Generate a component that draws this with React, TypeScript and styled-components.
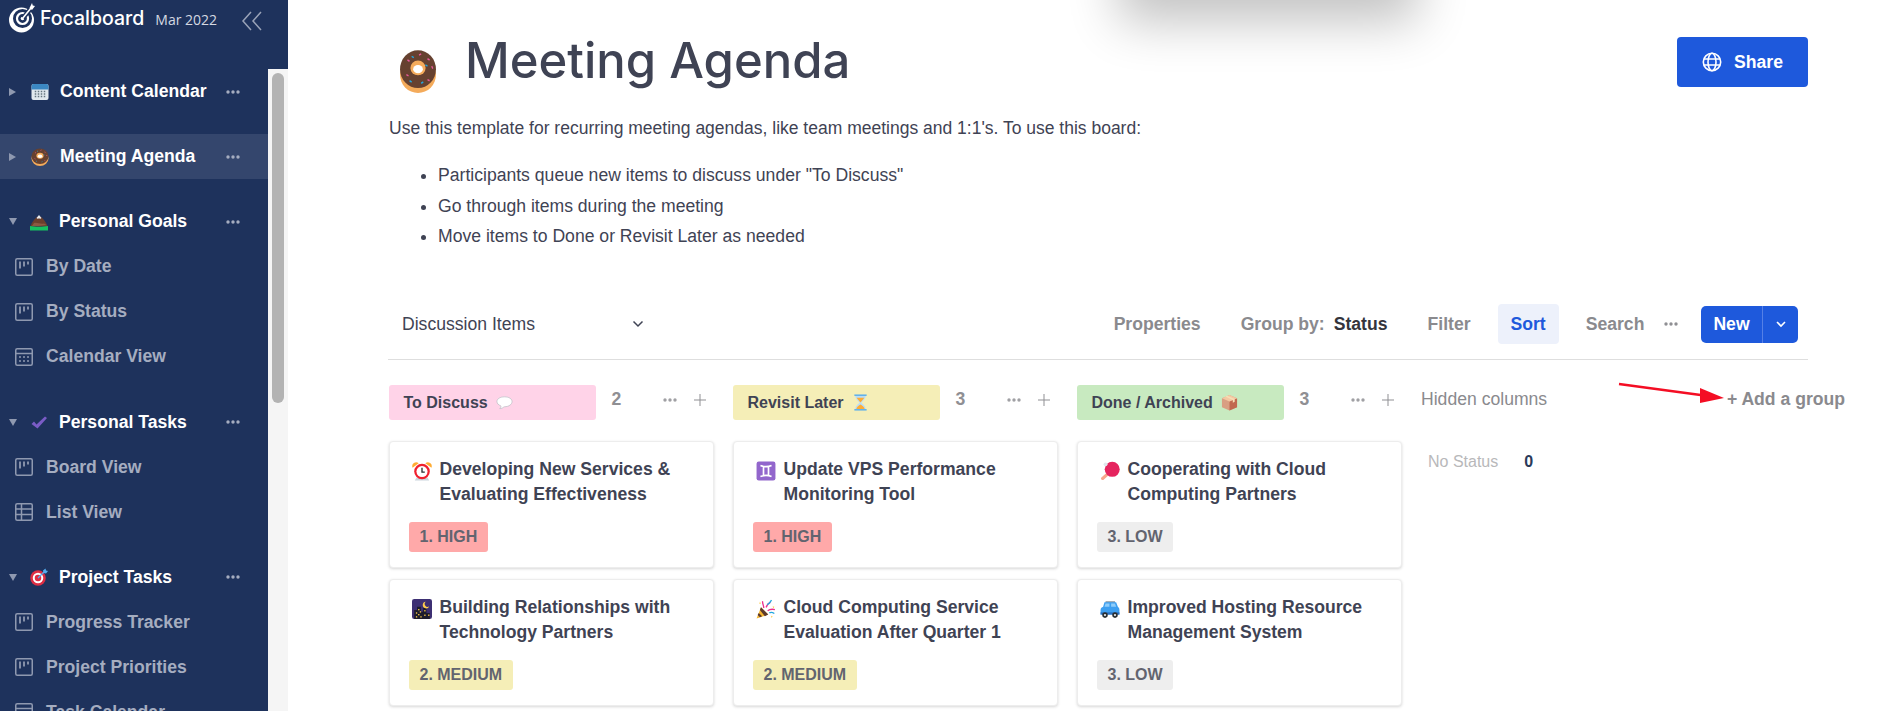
import * as React from 'react';
import styled, { createGlobalStyle } from 'styled-components';

const GlobalStyle = createGlobalStyle`
    html, body { margin: 0; padding: 0; height: 100%; overflow: hidden; background: #fff; }
    body { font-family: "Liberation Sans", Arial, sans-serif; color: #3f4354; }
`;

type EmojiName = 'calendar' | 'donut' | 'mountain' | 'check' | 'target' | 'alarm' | 'gemini' | 'night'
    | 'party' | 'pong' | 'car' | 'hourglass' | 'speech' | 'package';

const EmojiSvg = styled.svg<{ $size: number, $height?: number }>`
    display: block;
    flex: none;
    width: ${p => p.$size}px;
    height: ${p => p.$height ? p.$height : p.$size}px;
`;

const emojiParts: { [key in EmojiName]: React.ReactNode } = {
    calendar: <>
        <rect x="1" y="2" width="34" height="32" rx="4" fill="#e1e8ed" />
        <path d="M1 13V6a4 4 0 0 1 4-4h26a4 4 0 0 1 4 4v7z" fill="#3b88c3" />
        {[9, 15, 21, 27].map(x => [17, 22, 27].map(y => <rect key={x + '-' + y} x={x - 1.5} y={y - 1.5} width="3" height="3" fill="#66757f" />))}
    </>,
    donut: <>
        <ellipse cx="18" cy="21" rx="17" ry="15" fill="#f4ab5b" />
        <ellipse cx="18" cy="16.5" rx="17" ry="15.5" fill="#664130" />
        <ellipse cx="18" cy="15.5" rx="7.2" ry="6" fill="#f4ab5b" />
        <ellipse cx="18" cy="16.5" rx="4.6" ry="3.4" fill="#fff" />
        <path d="M8 9l2 1M19 5l2-1M27 8l2 1M31 14l1 2M7 21l2 1M27 25l2 1" stroke="#ea5a9c" strokeWidth="1.2" />
        <path d="M12 6l2 1M25 13l2 1M10 26l2 1M21 28l2-1" stroke="#22a7e0" strokeWidth="1.2" />
    </>,
    mountain: <>
        <path d="M1 27C3 19 11 8 18 6c7 2 15 13 17 21z" fill="#6a3f2c" />
        <path d="M13 10l5-6 5 6-3 2-2-2-2 2z" fill="#e6e9ee" />
        <path d="M8 20c6-2 13 3 20 1l5 3-16 2-13 0z" fill="#8a5a42" />
        <path d="M0 26c9 2 26 2 36 0v9H0z" fill="#16c060" />
    </>,
    check: <path d="M3 22l5-5 5 6L30 7l4 3-19 21z" fill="#7a5cc6" />,
    target: <>
        <circle cx="16" cy="20" r="15.5" fill="#dd2e44" />
        <circle cx="16" cy="20" r="10.5" fill="#fff" />
        <circle cx="16" cy="20" r="6.5" fill="#dd2e44" />
        <path d="M16 20L30 6" stroke="#55acee" strokeWidth="2.4" />
        <path d="M26 5l5-4 1 4 4 1-4 5-5-1z" fill="#55acee" />
    </>,
    alarm: <>
        <path d="M1 12a7 7 0 0 1 11-8zM35 12a7 7 0 0 0-11-8z" fill="#ffac33" />
        <path d="M8 30h20l3 5H5z" fill="#ccd6dd" />
        <circle cx="18" cy="19" r="14" fill="#f0202e" />
        <circle cx="18" cy="19" r="10" fill="#fff" />
        <path d="M18 12v8h5" stroke="#292f33" strokeWidth="2.400" fill="none" />
    </>,
    gemini: <>
        <rect x="1" y="1" width="34" height="34" rx="4" fill="#9266cc" />
        <path d="M8 8c6 2.5 14 2.5 20 0M8 28c6-2.500 14-2.500 20 0M13.500 10v16M22.500 10v16" stroke="#fff" strokeWidth="3" fill="none" />
    </>,
    night: <>
        <rect x="0" y="0" width="36" height="36" rx="4" fill="#3d2f73" />
        <path d="M4 36V20h5v-6h7v9h4v-7h6v9h6v11z" fill="#1c1c2c" />
        <path d="M25 5a6 6 0 1 0 6 8 5 5 0 0 1-6-8z" fill="#ffcc4d" />
        {[[7, 24], [11, 18], [11, 27], [14, 22], [22, 20], [22, 28], [29, 28], [7, 31], [15, 31]].map(([x, y]) => <rect key={x + '-' + y} x={x} y={y} width="2.400" height="2.400" fill="#ffcc4d" />)}
    </>,
    party: <>
        <path d="M1 35l8-20 13 13z" fill="#f5b530" />
        <path d="M5 25l6 6-4 2-4-4zM9 15l13 13-6 3L7 20z" fill="#5c3a2e" />
        <path d="M14 16c0-5-3-8-2-12M18 15c3-4 2-7 8-9M21 21c4-3 8-3 13-2" stroke="#ec2f8c" strokeWidth="2.400" fill="none" />
        <path d="M20 10c3-1 5-3 8-8M24 25c3-2 6-1 9 1" stroke="#22a7e0" strokeWidth="2.400" fill="none" />
        <path d="M7 5l2 3-3 1zM30 13l3 1-2 3zM27 30l3 1-2 3z" fill="#ffcc4d" />
    </>,
    pong: <>
        <path d="M11 22l-9 8a3 3 0 0 0 4 4l9-8z" fill="#f7a78d" />
        <circle cx="22" cy="15" r="13.500" fill="#e5245e" />
        <circle cx="10" cy="6" r="3.500" fill="#e1e8ed" />
    </>,
    car: <>
        <path d="M10 4h17v3H10z" fill="#8a97a3" />
        <path d="M8 6h21l4 10H5z" fill="#3d9ff0" />
        <path d="M1 20c0-4 3-6 7-6h21c4 0 6 2 6 6v8H1z" fill="#3d9ff0" />
        <path d="M10 8h7v6H8zM20 8h7l2 6h-9z" fill="#8fcdfa" />
        <path d="M1 24h34v4H1z" fill="#2a6fc0" />
        <circle cx="9" cy="29" r="5" fill="#292f33" /><circle cx="9" cy="29" r="2" fill="#e1e8ed" />
        <circle cx="27" cy="29" r="5" fill="#292f33" /><circle cx="27" cy="29" r="2" fill="#e1e8ed" />
    </>,
    hourglass: <>
        <path d="M7 3h22c0 8-7 12-9 15 2 3 9 7 9 15H7c0-8 7-12 9-15-2-3-9-7-9-15z" fill="#bbddf5" />
        <path d="M10 8h16c-2 4-6 7-8 10-2-3-6-6-8-10zM9 32c1-5 6-8 9-10 3 2 8 5 9 10z" fill="#ffac33" />
        <rect x="5" y="1" width="26" height="3" fill="#55acee" /><rect x="5" y="32" width="26" height="3" fill="#55acee" />
    </>,
    speech: <>
        <path d="M18 6C9 6 2 10 2 16c0 4 3 7 8 9 1 2 0 4-2 6 4 0 7-2 9-4h1c9 0 16-5 16-11S27 6 18 6z" fill="#fff" stroke="#b9bdc4" strokeWidth="1.500" />
    </>,
    package: <>
        <path d="M18 2l16 7v19l-16 7-16-7V9z" fill="#d99e82" />
        <path d="M18 16l16-7v19l-16 7z" fill="#c1694f" />
        <path d="M18 2l16 7-16 7-16-7z" fill="#f4c8a2" />
        <path d="M9 5.500l16 7v6l4-2v-6L13 3.500z" fill="#f7deb5" />
    </>,
};

const Emoji: React.FC<{ name: EmojiName, size: number, height?: number }> = (props) => (
    <EmojiSvg $size={props.size} $height={props.height} viewBox="0 0 36 36" preserveAspectRatio="none" aria-hidden="true">{emojiParts[props.name]}</EmojiSvg>
);

const Page = styled.div`
    display: flex;
    width: 1889px;
    height: 711px;
    overflow: hidden;
    position: relative;
`;

const Sidebar = styled.aside`
    flex: none;
    width: 288px;
    height: 711px;
    display: flex;
    flex-direction: column;
    background: #1e325c;
`;

const SideHeader = styled.div`
    flex: none;
    height: 69px;
    display: flex;
    align-items: flex-start;
    padding: 3px 0 0 9px;
    box-sizing: border-box;
`;

const LogoIcon = styled.svg`
    flex: none;
    width: 26px;
    height: 30px;
`;

const LogoText = styled.span`
    margin: 2px 0 0 5px;
    font-family: Inter, "Liberation Sans", sans-serif;
    font-size: 19.500px;
    line-height: 26px;
    font-weight: 500;
    color: #fff;
`;

const LogoDate = styled.span`
    margin: 6px 0 0 11px;
    font-family: "Open Sans", "Liberation Sans", sans-serif;
    font-size: 14px;
    line-height: 22px;
    color: #d5d9e2;
`;

const CollapseIcon = styled.svg`
    margin: 7px 0 0 24px;
    width: 22px;
    height: 22px;
    flex: none;
`;

const SideBody = styled.div`
    flex: 1;
    min-height: 0;
    display: flex;
`;

const SideList = styled.div`
    flex: 1;
    overflow: hidden;
`;

const Track = styled.div`
    flex: none;
    width: 20px;
    padding: 4px 4px 0;
    box-sizing: border-box;
    background: #f5f5f5;
`;

const Thumb = styled.div`
    height: 330px;
    border-radius: 6px;
    background: #b3b3b3;
`;

const Group = styled.div`
    margin-bottom: 20.200px;
`;

const BoardRow = styled.div<{ $active?: boolean }>`
    height: 45px;
    display: flex;
    align-items: center;
    padding-left: 9px;
    background: ${p => p.$active ? '#34466d' : 'transparent'};
`;

const Arrow = styled.span<{ $open?: boolean }>`
    flex: none;
    width: 0;
    height: 0;
    ${p => p.$open
        ? 'border-left: 4.500px solid transparent; border-right: 4.500px solid transparent; border-top: 7px solid #8f99b0; margin-right: 13px;'
        : 'border-top: 4.500px solid transparent; border-bottom: 4.500px solid transparent; border-left: 7px solid #8f99b0; margin-right: 15px;'}
`;

const BoardName = styled.span`
    flex: 1;
    margin-left: 11px;
    font-size: 17.600px;
    font-weight: 700;
    color: #fff;
`;

const SideDots = styled.svg`
    flex: none;
    width: 14px;
    height: 4px;
    margin-right: 28px;
`;

const ViewRow = styled.div`
    height: 45px;
    display: flex;
    align-items: center;
    gap: 13px;
    padding-left: 15px;
    font-size: 17.600px;
    font-weight: 700;
    color: #a5adc0;
`;

const ViewIcon = styled.svg`
    flex: none;
    width: 18px;
    height: 18px;
`;

const Main = styled.main`
    flex: 1;
    min-width: 0;
    padding: 37px 81px 0 100px;
`;

const TitleRow = styled.div`
    display: flex;
    align-items: flex-start;
    height: 70px;
    padding-left: 11px;
`;

const TitleEmoji = styled.div`
    flex: none;
    margin-top: 12px;
`;

const Title = styled.h1`
    flex: 1;
    margin: -12px 0 0 28px;
    font-family: Inter, "Liberation Sans", sans-serif;
    font-size: 49px;
    line-height: 72px;
    font-weight: 500;
    color: #3f4354;
`;

const ShareButton = styled.button`
    flex: none;
    width: 131px;
    height: 50px;
    display: flex;
    align-items: center;
    justify-content: center;
    gap: 12px;
    border: 0;
    border-radius: 4px;
    background: #1e59dc;
    color: #fff;
    font-family: inherit;
    font-size: 17.600px;
    font-weight: 700;
`;

const Description = styled.p`
    margin: 11px 0 0 1px;
    font-size: 17.500px;
    line-height: 20px;
    color: #3f4354;
`;

const Bullets = styled.ul`
    margin: 22px 0 0;
    padding: 0 0 0 50px;
    font-size: 17.600px;
    line-height: 30.500px;
    color: #3f4354;
`;

const Toolbar = styled.div`
    margin-top: 37.500px;
    height: 71px;
    display: flex;
    align-items: center;
    padding: 0 10px 0 14px;
    border-bottom: 1px solid #dedede;
    box-sizing: border-box;
`;

const ViewTitle = styled.div`
    width: 242px;
    display: flex;
    align-items: center;
    justify-content: space-between;
    font-size: 17.600px;
    color: #3f4354;
`;

const ToolGroup = styled.div`
    margin-left: auto;
    display: flex;
    align-items: center;
    gap: 14px;
`;

const ToolButton = styled.span<{ $active?: boolean }>`
    display: flex;
    align-items: center;
    height: 40px;
    padding: 0 13px;
    border-radius: 4px;
    font-size: 17.600px;
    font-weight: 700;
    color: ${p => p.$active ? '#1e59dc' : '#8a8a8e'};
    background: ${p => p.$active ? '#edf1fb' : 'transparent'};
`;

const GroupValue = styled.span`
    margin-left: 9px;
    color: #34343c;
`;

const MoreIcon = styled.svg`
    flex: none;
    margin-left: -7.400px;
`;

const NewButton = styled.div`
    display: flex;
    align-items: center;
    width: 97px;
    height: 37px;
    margin-left: 9px;
    border-radius: 5px;
    background: #1e59dc;
    color: #fff;
    font-size: 17.600px;
    font-weight: 700;
`;

const NewLabel = styled.span`
    width: 61px;
    height: 100%;
    display: flex;
    align-items: center;
    justify-content: center;
    border-right: 1px solid #5580e6;
`;

const NewCaret = styled.span`
    flex: 1;
    display: flex;
    justify-content: center;
`;

const Board = styled.div`
    display: flex;
    gap: 19px;
    padding: 25px 0 0 1px;
`;

const Column = styled.div`
    flex: none;
    width: 325px;
`;

const ColumnHeader = styled.div`
    height: 35px;
    display: flex;
    align-items: center;
    margin-bottom: 21px;
`;

const Pill = styled.div<{ $bg: string }>`
    flex: none;
    width: 206.500px;
    height: 35px;
    display: flex;
    align-items: center;
    gap: 8px;
    padding-left: 14.500px;
    box-sizing: border-box;
    border-radius: 3px;
    background: ${p => p.$bg};
    font-size: 16px;
    font-weight: 700;
    color: #3f4354;
`;

const Count = styled.span`
    width: 67.500px;
    padding-left: 16px;
    box-sizing: border-box;
    margin-top: -6px;
    font-size: 17.600px;
    font-weight: 700;
    color: #8f8f93;
`;

const HeaderIcon = styled.svg`
    flex: none;
    margin-top: -6px;
`;

const PlusIcon = styled(HeaderIcon)`
    margin-left: 17px;
`;

const Card = styled.div`
    height: 127px;
    margin-bottom: 11px;
    padding: 15px 19px 0;
    box-sizing: border-box;
    border: 1px solid #ededed;
    border-radius: 4px;
    background: #fff;
    box-shadow: 0 1px 3px rgba(0, 0, 0, 0.16);
`;

const CardHead = styled.div`
    display: flex;
    gap: 7.500px;
    padding-left: 3px;
`;

const CardEmojiBox = styled.div`
    flex: none;
    padding-top: 4px;
`;

const CardTitle = styled.div`
    font-size: 17.600px;
    line-height: 25px;
    font-weight: 700;
    color: #3f4354;
    white-space: nowrap;
`;

const Priority = styled.span<{ $bg: string }>`
    display: inline-block;
    margin-top: 15px;
    height: 30px;
    padding: 0 10.500px;
    border-radius: 3px;
    background: ${p => p.$bg};
    font-size: 16px;
    line-height: 30px;
    font-weight: 700;
    color: #62646f;
`;

const HiddenColumn = styled.div`
    flex: none;
    width: 424px;
`;

const HiddenHeader = styled.div`
    height: 35px;
    display: flex;
    align-items: flex-start;
    justify-content: space-between;
    padding-top: 5px;
    box-sizing: border-box;
    margin-bottom: 21px;
`;

const HiddenTitle = styled.span`
    font-size: 17.600px;
    line-height: 18px;
    color: #8a8a8e;
`;

const AddGroup = styled.span`
    font-size: 17.600px;
    line-height: 18px;
    font-weight: 700;
    color: #8a8a8e;
`;

const HiddenRow = styled.div`
    display: flex;
    gap: 26px;
    padding: 11px 0 0 7px;
    font-size: 16px;
    line-height: 20px;
    color: #b8b8ba;
`;

const HiddenCount = styled.span`
    font-size: 16px;
    font-weight: 700;
    color: #2a3a5a;
`;

// the red annotation arrow drawn on top of the screenshot
const RedArrow = styled.svg`
    position: absolute;
    left: 1613px;
    top: 378px;
    width: 114px;
    height: 30px;
`;

// blurred shadow of a popup sitting above the viewport
const TopShadow = styled.div`
    position: absolute;
    left: 1118px;
    top: -160px;
    width: 300px;
    height: 150px;
    border-radius: 8px;
    box-shadow: 0 32px 50px rgba(0, 0, 0, 0.24);
`;

const Dots: React.FC<{ color: string }> = ({ color }) => (
    <>
        <circle cx="2" cy="2" r="1.700" fill={color} />
        <circle cx="7" cy="2" r="1.700" fill={color} />
        <circle cx="12" cy="2" r="1.700" fill={color} />
    </>
);

const BoardIcon = () => (
    <ViewIcon viewBox="0 0 18 18">
        <rect x="0.750" y="0.750" width="16.500" height="16.500" rx="1.500" fill="none" stroke="#8f99b0" strokeWidth="1.500" />
        <path d="M5 3.500v7M9 3.500v5M13 3.500v3" stroke="#a5adc0" strokeWidth="1.500" />
    </ViewIcon>
);

const CalendarIcon = () => (
    <ViewIcon viewBox="0 0 18 18">
        <rect x="0.750" y="0.750" width="16.500" height="16.500" rx="1.500" fill="none" stroke="#8f99b0" strokeWidth="1.500" />
        <path d="M1 5.500h16" stroke="#8f99b0" strokeWidth="1.500" />
        <path d="M4 9h2M8 9h2M12 9h2M4 13h2M8 13h2M12 13h2" stroke="#8f99b0" strokeWidth="1.500" />
    </ViewIcon>
);

const TableIcon = () => (
    <ViewIcon viewBox="0 0 18 18">
        <rect x="0.750" y="0.750" width="16.500" height="16.500" rx="1.500" fill="none" stroke="#8f99b0" strokeWidth="1.500" />
        <path d="M1 6h16M1 11.500h16M6.500 1v16" stroke="#8f99b0" strokeWidth="1.500" />
    </ViewIcon>
);

type SideView = { name: string, icon: 'board' | 'calendar' | 'table' };
type SideBoard = { name: string, emoji: EmojiName, open?: boolean, active?: boolean, views?: SideView[] };

const sideBoards: SideBoard[] = [
    { name: 'Content Calendar', emoji: 'calendar' },
    { name: 'Meeting Agenda', emoji: 'donut', active: true },
    {
        name: 'Personal Goals', emoji: 'mountain', open: true, views: [
            { name: 'By Date', icon: 'board' },
            { name: 'By Status', icon: 'board' },
            { name: 'Calendar View', icon: 'calendar' },
        ],
    },
    {
        name: 'Personal Tasks', emoji: 'check', open: true, views: [
            { name: 'Board View', icon: 'board' },
            { name: 'List View', icon: 'table' },
        ],
    },
    {
        name: 'Project Tasks', emoji: 'target', open: true, views: [
            { name: 'Progress Tracker', icon: 'board' },
            { name: 'Project Priorities', icon: 'board' },
            { name: 'Task Calendar', icon: 'calendar' },
        ],
    },
];

const priorityColors: { [key: string]: string } = {
    '1. HIGH': '#ffa9a9',
    '2. MEDIUM': '#f5eeb7',
    '3. LOW': '#eeeeee',
};

type CardData = { emoji: EmojiName, title: string[], priority: string };
type ColumnData = { name: string, emoji: EmojiName, bg: string, count: number, cards: CardData[] };

const columns: ColumnData[] = [
    {
        name: 'To Discuss', emoji: 'speech', bg: '#ffd3e8', count: 2, cards: [
            { emoji: 'alarm', title: ['Developing New Services &', 'Evaluating Effectiveness'], priority: '1. HIGH' },
            { emoji: 'night', title: ['Building Relationships with', 'Technology Partners'], priority: '2. MEDIUM' },
        ],
    },
    {
        name: 'Revisit Later', emoji: 'hourglass', bg: '#f5eeb7', count: 3, cards: [
            { emoji: 'gemini', title: ['Update VPS Performance', 'Monitoring Tool'], priority: '1. HIGH' },
            { emoji: 'party', title: ['Cloud Computing Service', 'Evaluation After Quarter 1'], priority: '2. MEDIUM' },
        ],
    },
    {
        name: 'Done / Archived', emoji: 'package', bg: '#c8eac0', count: 3, cards: [
            { emoji: 'pong', title: ['Cooperating with Cloud', 'Computing Partners'], priority: '3. LOW' },
            { emoji: 'car', title: ['Improved Hosting Resource', 'Management System'], priority: '3. LOW' },
        ],
    },
];

const SideNav: React.FC = () => (
    <Sidebar>
        <SideHeader>
            <LogoIcon viewBox="0 0 26 30">
                <path fillRule="evenodd" fill="#fff" d="M12.500 4.500a12.500 12.500 0 1 0 12.500 12.500 12.500 12.500 0 0 0-12.500-12.500zM13.500 6a9.500 9.500 0 1 1 0 19 9.500 9.500 0 0 1 0-19z" />
                <circle cx="13.500" cy="15.500" r="5.500" fill="none" stroke="#fff" strokeWidth="2.200" />
                <circle cx="13.500" cy="15.500" r="1.800" fill="#fff" />
                <path d="M14 15L24 3" stroke="#1e325c" strokeWidth="4.500" />
                <path d="M13.500 15.500L22 5" stroke="#fff" strokeWidth="1.600" />
                <path d="M20.500 5l2.500-5 .8 2.500 2.200 .5-3 4z" fill="#fff" />
            </LogoIcon>
            <LogoText>Focalboard</LogoText>
            <LogoDate>Mar 2022</LogoDate>
            <CollapseIcon viewBox="0 0 22 22">
                <path d="M10 2L2 11l8 9M20 2l-8 9 8 9" fill="none" stroke="#9aa3b8" strokeWidth="1.500" />
            </CollapseIcon>
        </SideHeader>
        <SideBody>
            <SideList>
                {sideBoards.map(board => (
                    <Group key={board.name}>
                        <BoardRow $active={board.active}>
                            <Arrow $open={board.open} />
                            <Emoji name={board.emoji} size={18} />
                            <BoardName>{board.name}</BoardName>
                            <SideDots viewBox="0 0 14 4"><Dots color="#a5adc0" /></SideDots>
                        </BoardRow>
                        {board.views ? board.views.map(view => (
                            <ViewRow key={view.name}>
                                {view.icon == 'board' ? <BoardIcon /> : view.icon == 'calendar' ? <CalendarIcon /> : <TableIcon />}
                                {view.name}
                            </ViewRow>
                        )) : ''}
                    </Group>
                ))}
            </SideList>
            <Track><Thumb /></Track>
        </SideBody>
    </Sidebar>
);

const BoardColumn: React.FC<{ column: ColumnData }> = ({ column }) => (
    <Column>
        <ColumnHeader>
            <Pill $bg={column.bg}>
                {column.name}
                <Emoji name={column.emoji} size={17} />
            </Pill>
            <Count>{column.count}</Count>
            <HeaderIcon width="14" height="4" viewBox="0 0 14 4"><Dots color="#a0a0a4" /></HeaderIcon>
            <PlusIcon width="12" height="12" viewBox="0 0 12 12">
                <path d="M6 0v12M0 6h12" stroke="#8f8f93" strokeWidth="1" />
            </PlusIcon>
        </ColumnHeader>
        {column.cards.map(card => (
            <Card key={card.title[0]}>
                <CardHead>
                    <CardEmojiBox><Emoji name={card.emoji} size={20} /></CardEmojiBox>
                    <CardTitle>{card.title[0]}<br />{card.title[1]}</CardTitle>
                </CardHead>
                <Priority $bg={priorityColors[card.priority]}>{card.priority}</Priority>
            </Card>
        ))}
    </Column>
);

const App: React.FC = () => (
    <Page>
        <GlobalStyle />
        <SideNav />
        <Main>
            <TitleRow>
                <TitleEmoji><Emoji name="donut" size={38} height={44} /></TitleEmoji>
                <Title>Meeting Agenda</Title>
                <ShareButton>
                    <svg width="20" height="20" viewBox="0 0 20 20" fill="none" stroke="#fff" strokeWidth="1.600">
                        <circle cx="10" cy="10" r="8.700" />
                        <ellipse cx="10" cy="10" rx="4" ry="8.700" />
                        <path d="M2 7h16M2 13h16" />
                    </svg>
                    Share
                </ShareButton>
            </TitleRow>
            <Description>Use this template for recurring meeting agendas, like team meetings and 1:1's. To use this board:</Description>
            <Bullets>
                <li>Participants queue new items to discuss under "To Discuss"</li>
                <li>Go through items during the meeting</li>
                <li>Move items to Done or Revisit Later as needed</li>
            </Bullets>
            <Toolbar>
                <ViewTitle>
                    Discussion Items
                    <svg width="12" height="8" viewBox="0 0 12 8" fill="none" stroke="#3f4354" strokeWidth="1.500"><path d="M1.500 1.500L6 6l4.500-4.500" /></svg>
                </ViewTitle>
                <ToolGroup>
                    <ToolButton>Properties</ToolButton>
                    <ToolButton>Group by:<GroupValue>Status</GroupValue></ToolButton>
                    <ToolButton>Filter</ToolButton>
                    <ToolButton $active>Sort</ToolButton>
                    <ToolButton>Search</ToolButton>
                    <MoreIcon width="14" height="4" viewBox="0 0 14 4"><Dots color="#8f8f93" /></MoreIcon>
                    <NewButton>
                        <NewLabel>New</NewLabel>
                        <NewCaret>
                            <svg width="10" height="7" viewBox="0 0 10 7" fill="none" stroke="#fff" strokeWidth="1.600"><path d="M1 1l4 4 4-4" /></svg>
                        </NewCaret>
                    </NewButton>
                </ToolGroup>
            </Toolbar>
            <Board>
                {columns.map(column => <BoardColumn key={column.name} column={column} />)}
                <HiddenColumn>
                    <HiddenHeader>
                        <HiddenTitle>Hidden columns</HiddenTitle>
                        <AddGroup>+ Add a group</AddGroup>
                    </HiddenHeader>
                    <HiddenRow>No Status<HiddenCount>0</HiddenCount></HiddenRow>
                </HiddenColumn>
            </Board>
        </Main>
        <TopShadow />
        <RedArrow viewBox="0 0 114 30">
            <path d="M6 6L95 18" stroke="#f40e24" strokeWidth="2.500" />
            <path d="M111 20L87 10v15z" fill="#f40e24" />
        </RedArrow>
    </Page>
);

export default App;
